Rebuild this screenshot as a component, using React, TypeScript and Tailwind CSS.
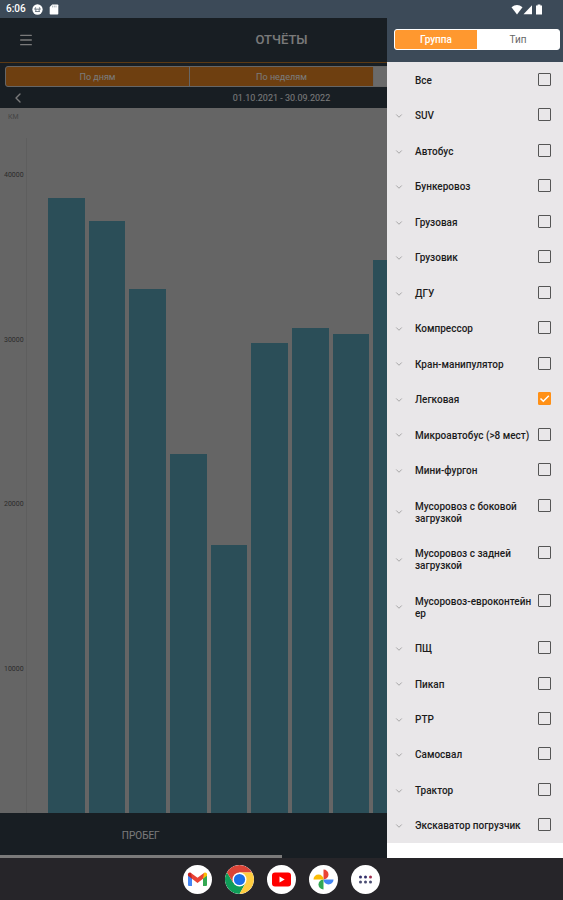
import { ChevronDown, ChevronLeft, Menu } from "lucide-react";
import type { ReactNode } from "react";

type Group = { name: string; expandable?: boolean; checked?: boolean; breakAll?: boolean };

const groups: Group[] = [
  { name: "Все", expandable: false },
  { name: "SUV" },
  { name: "Автобус" },
  { name: "Бункеровоз" },
  { name: "Грузовая" },
  { name: "Грузовик" },
  { name: "ДГУ" },
  { name: "Компрессор" },
  { name: "Кран-манипулятор" },
  { name: "Легковая", checked: true },
  { name: "Микроавтобус (>8 мест)" },
  { name: "Мини-фургон" },
  { name: "Мусоровоз с боковой загрузкой" },
  { name: "Мусоровоз с задней загрузкой" },
  { name: "Мусоровоз-евроконтейнер", breakAll: true },
  { name: "ПЩ" },
  { name: "Пикап" },
  { name: "РТР" },
  { name: "Самосвал" },
  { name: "Трактор" },
  { name: "Экскаватор погрузчик" },
];

const AXIS_MIN = 1275;
const AXIS_MAX = 44088;
const mileage = [38623, 37227, 33097, 23077, 17550, 29818, 30729, 30365, 34859, 33000, 31000, 29000];

function StatusBar() {
  return (
    <header className="flex h-[18px] items-center justify-between bg-[#3c4a58] pl-1.5 pr-[19px] text-white">
      <div className="flex items-center gap-1.5">
        <span className="text-[10px] leading-3 font-medium">6:06</span>
        <svg viewBox="0 0 12 12" className="size-[11px]" aria-hidden="true">
          <circle cx="6" cy="6" r="5.6" fill="#fff" />
          <path d="M2.6 5.6h6.8M3.4 8.2h5.2M4 3.6 3.2 5.6M8 3.6l.8 2M4.2 5.8v2.4M7.8 5.8v2.4" stroke="#53606d" strokeWidth="0.9" fill="none" />
        </svg>
        <svg viewBox="0 0 10 11" className="h-[11px] w-2.5" aria-hidden="true">
          <path d="M3.2 0.5H8.5a.8.8 0 0 1 .8.8v8.4a.8.8 0 0 1-.8.8H1.5a.8.8 0 0 1-.8-.8V3Z" fill="#fff" />
          <path d="M3.6 1.6v1.8M5.3 1.6v1.8M7 1.6v1.8" stroke="#8b959e" strokeWidth="0.7" />
        </svg>
      </div>
      <svg viewBox="0 0 33 11" className="h-[11px] w-[33px]" aria-hidden="true" fill="#fff">
        <path d="M0.5 3.2Q6 -1 11.5 3.2L6 10.5Z" />
        <path d="M12.5 10.2 21 1.2v9Z" />
        <path d="M25 1.6h1.6V.6h2.8v1h1.6v9h-6Z" />
      </svg>
    </header>
  );
}

function Chart() {
  return (
    <section className="flex flex-1 flex-col bg-[#cacaca]" aria-label="Пробег, км">
      <div className="flex flex-1">
        <div className="flex w-[26px] flex-col text-[7px] leading-[10px] text-[#585858]">
          <span className="h-[62px] pt-1 pl-2 text-[#8c8c8c]">КМ</span>
          <div className="grid flex-1 grid-rows-[165fr_164fr_165fr_149fr] pl-1">
            <span>40000</span>
            <span>30000</span>
            <span>20000</span>
            <span>10000</span>
          </div>
        </div>
        <div className="mt-[30px] w-px bg-[#bcbcbc]" />
        <div className="grid flex-1 grid-cols-12 items-end gap-1 pr-[31px] pl-[21px]">
          {mileage.map((value, month) => (
            <div
              key={month}
              className="bg-[#569cb0]"
              style={{ height: `${((value - AXIS_MIN) / (AXIS_MAX - AXIS_MIN)) * 100}%` }}
            />
          ))}
        </div>
      </div>
    </section>
  );
}

function Reports() {
  return (
    <main className="relative col-start-1 row-start-1 flex flex-col bg-[#303c47] text-[#f4f4f4]">
      <div className="grid h-[45px] grid-cols-[1fr_auto_1fr] items-center border-b border-[#b87428] px-[18px]">
        <button type="button" aria-label="Меню">
          <Menu className="size-4" strokeWidth={2} />
        </button>
        <h1 className="text-[13px] leading-4 font-medium">ОТЧЁТЫ</h1>
      </div>
      <div className="mx-[5px] mt-[3px] grid h-[21px] grid-cols-3 gap-px overflow-hidden rounded-[3px] border border-[#ccc] bg-[#ccc] text-[9px] leading-3">
        <button type="button" className="bg-[#dc7e20]">По дням</button>
        <button type="button" className="bg-[#dc7e20]">По неделям</button>
        <button type="button" className="bg-[#d4d4d4] text-[#555]">По месяцам</button>
      </div>
      <div className="grid h-[21px] grid-cols-[1fr_auto_1fr] items-center px-2.5 text-[9px] leading-3">
        <button type="button" aria-label="Предыдущий период">
          <ChevronLeft className="size-4" strokeWidth={2} />
        </button>
        <span>01.10.2021 - 30.09.2022</span>
      </div>
      <Chart />
      <div className="grid h-[45px] grid-cols-2 text-[10px] leading-3">
        <button type="button" className="border-b-[3px] border-[#f4f4f4] pt-1">ПРОБЕГ</button>
      </div>
      <div className="absolute inset-0 bg-black/50" />
    </main>
  );
}

function GroupRow({ name, expandable = true, checked = false, breakAll = false }: Group) {
  return (
    <li className="flex grow">
      <label className="flex grow pl-[7px] pr-3">
        <span className="mr-3 flex w-[9px] items-center pt-0.5">
          {expandable && <ChevronDown className="size-[10px] shrink-0 text-[#999]" strokeWidth={2} />}
        </span>
        <span className={`w-[117px] pt-[13px] pb-[10px] text-[10px] leading-3 font-medium ${breakAll ? "break-all" : ""}`}>{name}</span>
        <span className="mt-[11px] ml-auto grid size-[13px] shrink-0 self-start">
          <input
            type="checkbox"
            defaultChecked={checked}
            className="peer col-start-1 row-start-1 size-[13px] appearance-none rounded-[1px] border border-[#555] checked:border-[#ff9016] checked:bg-[#ff9016]"
          />
          <svg viewBox="0 0 13 13" className="pointer-events-none invisible col-start-1 row-start-1 size-[13px] peer-checked:visible" aria-hidden="true">
            <path d="m2.5 6.500 2.800 2.800L10.800 3.800" fill="none" stroke="#fff" strokeWidth="1.500" />
          </svg>
        </span>
      </label>
    </li>
  );
}

function Drawer() {
  return (
    <aside className="relative col-start-1 row-start-1 flex w-[176px] flex-col justify-self-end bg-white pb-[15px] text-[#1c1c1c]">
      <div className="bg-[#3c4a58] pt-[11px] pr-[3px] pb-3 pl-[7px]">
        <div className="grid h-[21px] grid-cols-2 overflow-hidden rounded-[3px] border border-white bg-white text-[10px] leading-3">
          <button type="button" className="bg-[#ff982f] font-medium text-white">Группа</button>
          <button type="button" className="text-[#666]">Тип</button>
        </div>
      </div>
      <ul className="flex grow flex-col bg-[#e9e7e9]">
        {groups.map((group) => (
          <GroupRow key={group.name} {...group} />
        ))}
      </ul>
    </aside>
  );
}

function AppButton({ label, children }: { label: string; children: ReactNode }) {
  return (
    <button type="button" aria-label={label} className="size-[29px] overflow-hidden rounded-full bg-white">
      <svg viewBox="0 0 29 29" className="size-[29px]" aria-hidden="true">{children}</svg>
    </button>
  );
}

function Dock() {
  return (
    <nav className="flex h-[42px] items-center justify-center gap-[13px] bg-[#262529]">
      <AppButton label="Gmail">
        <path d="M5 9.5v10.2c0 .8.5 1.3 1.3 1.3H9v-8.5Z" fill="#4285f4" />
        <path d="M24 9.5v10.2c0 .8-.5 1.3-1.3 1.3H20v-8.5Z" fill="#34a853" />
        <path d="M20 9.5v4.3l4-3V9.3c0-1.7-1.8-2.4-3-1.4Z" fill="#fbbc04" />
        <path d="M5 9.3v1.5l4 3V9.5L8 7.9c-1.2-1-3-.3-3 1.4Z" fill="#c5221f" />
        <path d="M8 7.9 14.5 12.8 21 7.9 20 13.8 14.5 17.9 9 13.8Z" fill="#ea4335" />
      </AppButton>
      <AppButton label="Chrome">
        <path d="M14.5 14.5 8.4 18 1.9 7.2A14.5 14.5 0 0 0 14.5 29L20.6 18Z" fill="#0f9d58" />
        <path d="M14.5 7.5H27.1A14.5 14.5 0 0 0 1.9 7.2L8.4 18Z" fill="#db4437" />
        <path d="M14.5 7.5H27.2A14.5 14.5 0 0 1 14.5 29L20.6 18Z" fill="#ffcd40" />
        <circle cx="14.5" cy="14.5" r="7" fill="#fff" />
        <circle cx="14.5" cy="14.5" r="5.6" fill="#1a6fe8" />
      </AppButton>
      <AppButton label="YouTube">
        <rect x="5" y="7.5" width="19" height="14" rx="3" fill="#f00" />
        <path d="m12.5 11.500 5.200 3-5.200 3Z" fill="#fff" />
      </AppButton>
      <AppButton label="Google Фото">
        <path d="M14.5 4.5a5 5 0 0 1 0 10Z" fill="#ea4335" />
        <path d="M24.5 14.5a5 5 0 0 1-10 0Z" fill="#4285f4" />
        <path d="M14.5 24.5a5 5 0 0 1 0-10Z" fill="#34a853" />
        <path d="M4.5 14.5a5 5 0 0 1 10 0Z" fill="#fbbc04" />
      </AppButton>
      <AppButton label="Все приложения">
        <g fill="#4a4d72">
          <circle cx="9.5" cy="12" r="1.500" fill="#33306a" />
          <circle cx="14.5" cy="12" r="1.500" fill="#33306a" />
          <circle cx="19.5" cy="12" r="1.500" fill="#a03050" />
          <circle cx="9.5" cy="17" r="1.500" />
          <circle cx="14.5" cy="17" r="1.500" />
          <circle cx="19.5" cy="17" r="1.500" />
        </g>
      </AppButton>
    </nav>
  );
}

export default function App() {
  return (
    <div className="flex min-h-screen flex-col font-[Roboto,sans-serif]">
      <StatusBar />
      <div className="grid grow">
        <Reports />
        <Drawer />
      </div>
      <Dock />
    </div>
  );
}
